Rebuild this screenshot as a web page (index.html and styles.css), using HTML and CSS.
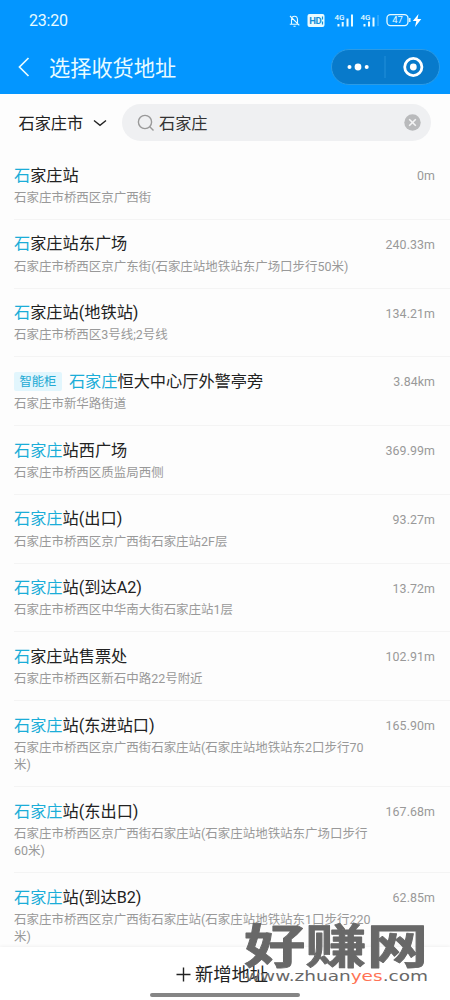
FILE: index.html
```html
<!DOCTYPE html>
<html lang="zh-CN">
<head>
<meta charset="utf-8">
<title>选择收货地址</title>
<link rel="stylesheet" href="styles.css">
</head>
<body>
<div class="screen">
  <header class="header">
    <div class="status">
      <span class="clock">23:20</span>
      <svg class="status-icons" width="140" height="20" viewBox="0 0 140 20" fill="none" stroke="#e8fbff">
        <path d="M6.5 14V10Q6.5 6.3 9.5 6.3T12.5 10V14M4.8 14.3H14.2M8.5 16.2H10.6M5 6L14.3 15.3" stroke-width="1.1"/>
        <rect x="22.5" y="4" width="17" height="13" rx="2" fill="#e8fbff" stroke="none"/>
        <text class="hd-label" x="24.2" y="14">HD</text>
        <path d="M37.5 6.5V9.5M37.5 11.5V14.5" stroke="#168ed8" stroke-width="1.2"/>
        <text class="signal-label" x="49.5" y="9.8">4G</text>
        <path d="M53.5 14V16.5M57.7 12V16.5M62.5 8.5V16.5M67 4.5V16.5" stroke-width="2"/>
        <text class="signal-label" x="75.5" y="9.8">4G</text>
        <path d="M79.5 14V16.5M84 11.5V16.5M88.5 7.5V16.5" stroke-width="2"/>
        <path d="M93 5V16" stroke="#55b9ff" stroke-width="1"/>
        <rect x="102" y="4.6" width="21" height="11" rx="3.5" stroke-width="1.3"/>
        <path d="M124.8 8V12" stroke-width="1.4"/>
        <text class="battery-label" x="112.5" y="13.3">47</text>
        <path d="M133.5 4L127.8 11H131.3L130 17L136.3 9H132.5Z" fill="#fff" stroke="none"/>
      </svg>
    </div>
    <div class="nav">
      <svg class="back" width="14" height="22" viewBox="0 0 14 22" fill="none" stroke="#e8fbff" stroke-width="1.7"><path d="M11.5 2L2.5 11L11.5 20"/></svg>
      <h1 class="nav-title">选择收货地址</h1>
      <svg class="capsule" width="109" height="36" viewBox="0 0 109 36">
        <rect x=".5" y=".5" width="108" height="35" rx="17.5" fill="#087acb" stroke="#2c9be5"/>
        <path d="M54 7V29" stroke="#238fd9"/>
        <g fill="#fff"><circle cx="18.5" cy="18" r="2"/><circle cx="27" cy="18" r="3.4"/><circle cx="35.7" cy="18" r="2"/><circle cx="82.3" cy="18" r="3.4"/></g>
        <circle cx="82.3" cy="18" r="8.6" fill="none" stroke="#fff" stroke-width="2.8"/>
      </svg>
    </div>
  </header>

  <div class="search-row">
    <span class="city">石家庄市</span>
    <svg class="chevron" width="14" height="8" viewBox="0 0 14 8" fill="none" stroke="#222" stroke-width="1.4"><path d="M1 1.5L7 6.3L13 1.5"/></svg>
    <div class="search">
      <svg width="18" height="18" viewBox="0 0 18 18" fill="none" stroke="#999" stroke-width="1.4"><circle cx="8" cy="8" r="6.6"/><path d="M12.8 12.8L16.5 16.5"/></svg>
      <span class="query">石家庄</span>
      <svg class="clear" width="17" height="17" viewBox="0 0 17 17"><circle cx="8.5" cy="8.5" r="8.2" fill="#b9babc"/><path d="M5.2 5.2L11.8 11.8M11.8 5.2L5.2 11.8" stroke="#f4f4f5" stroke-width="1.6"/></svg>
    </div>
  </div>

  <main class="list">
    <div class="item"><div class="top"><span class="name"><b>石</b>家庄站</span><span class="dist">0m</span></div><p class="addr">石家庄市桥西区京广西街</p></div>
    <div class="item"><div class="top"><span class="name"><b>石</b>家庄站东广场</span><span class="dist">240.33m</span></div><p class="addr">石家庄市桥西区京广东街(石家庄站地铁站东广场口步行50米)</p></div>
    <div class="item"><div class="top"><span class="name"><b>石</b>家庄站(地铁站)</span><span class="dist">134.21m</span></div><p class="addr">石家庄市桥西区3号线;2号线</p></div>
    <div class="item"><div class="top"><span class="tag">智能柜</span><span class="name"><b>石家庄</b>恒大中心厅外警亭旁</span><span class="dist">3.84km</span></div><p class="addr">石家庄市新华路街道</p></div>
    <div class="item"><div class="top"><span class="name"><b>石家庄</b>站西广场</span><span class="dist">369.99m</span></div><p class="addr">石家庄市桥西区质监局西侧</p></div>
    <div class="item"><div class="top"><span class="name"><b>石家庄</b>站(出口)</span><span class="dist">93.27m</span></div><p class="addr">石家庄市桥西区京广西街石家庄站2F层</p></div>
    <div class="item"><div class="top"><span class="name"><b>石家庄</b>站(到达A2)</span><span class="dist">13.72m</span></div><p class="addr">石家庄市桥西区中华南大街石家庄站1层</p></div>
    <div class="item"><div class="top"><span class="name"><b>石</b>家庄站售票处</span><span class="dist">102.91m</span></div><p class="addr">石家庄市桥西区新石中路22号附近</p></div>
    <div class="item"><div class="top"><span class="name"><b>石家庄</b>站(东进站口)</span><span class="dist">165.90m</span></div><p class="addr">石家庄市桥西区京广西街石家庄站(石家庄站地铁站东2口步行70<br>米)</p></div>
    <div class="item"><div class="top"><span class="name"><b>石家庄</b>站(东出口)</span><span class="dist">167.68m</span></div><p class="addr">石家庄市桥西区京广西街石家庄站(石家庄站地铁站东广场口步行<br>60米)</p></div>
    <div class="item"><div class="top"><span class="name"><b>石家庄</b>站(到达B2)</span><span class="dist">62.85m</span></div><p class="addr">石家庄市桥西区京广西街石家庄站(石家庄站地铁站东1口步行220<br>米)</p></div>
  </main>

  <footer class="footer">
    <div class="add"><svg width="15" height="15" viewBox="0 0 15 15" stroke="#222" stroke-width="1.4"><path d="M7.5 .5V14.5M.5 7.5H14.5"/></svg><span>新增地址</span></div>
    <div class="home-bar"></div>
  </footer>

  <svg class="watermark" width="186" height="70" viewBox="0 0 186 70">
    <text class="mark-name" transform="translate(0 46) scale(1.32 1)">好赚网</text>
    <text class="mark-url" x="1" y="64" textLength="183" lengthAdjust="spacingAndGlyphs">www.zhuan<tspan class="accent">yes</tspan>.com</text>
  </svg>
</div>
</body>
</html>
```
FILE: styles.css
```css
* { box-sizing: border-box; }
body { margin: 0; font-family: Roboto, "Noto Sans CJK SC", sans-serif; color: #222; }
.screen { position: relative; display: flex; flex-direction: column; width: 450px; height: 1000px; overflow: hidden; background: #fdfdfd; }
.header { flex: none; height: 94px; background: #0396ff; color: #e8fbff; }
.status { display: flex; justify-content: space-between; align-items: center; height: 40px; padding: 0 25px 0 29px; }
.clock { font-size: 16px; letter-spacing: -.2px; }
.signal-label, .battery-label { fill: #e8fbff; stroke: none; font-family: Roboto, sans-serif; }
.signal-label { font-size: 8px; font-weight: 500; }
.battery-label { font-size: 9.5px; text-anchor: middle; }
.hd-label { fill: #168ed8; stroke: none; font: 700 9.5px Roboto, sans-serif; letter-spacing: -.5px; }
.nav { display: flex; align-items: center; height: 54px; padding: 0 10px 0 17px; }
.nav-title { margin: 0 0 0 18px; padding-top: 3px; font-size: 21.2px; line-height: 30px; font-weight: 400; }
.capsule { margin-left: auto; }
.search-row { flex: none; display: flex; align-items: center; height: 57px; padding: 0 19px 0 18.5px; }
.city { width: 66px; padding-top: 3px; font-size: 16.2px; white-space: nowrap; line-height: 24px; }
.chevron { margin-left: 8.5px; }
.search { display: flex; align-items: center; flex: 1; height: 37px; margin-left: 15px; padding: 0 10px 0 15px; border-radius: 19px; background: #eff0f2; }
.query { margin-left: 4px; padding-top: 3px; font-size: 16.2px; line-height: 24px; color: #333; }
.clear { margin-left: auto; }
.list { flex: 1; min-height: 0; overflow: hidden; padding-left: 14px; }
.item { padding: 13.6px 15px 12.7px 0; border-bottom: 1px solid #f4f4f4; }
.top { display: flex; align-items: center; height: 22px; }
.name { font-size: 16.2px; line-height: 22px; white-space: nowrap; }
.name b { font-weight: 400; color: #1badd8; }
.tag { margin-right: 7px; padding: 1px 5.5px 0; border-radius: 2px; background: #e2f6fd; color: #22a9d3; font-size: 12.3px; line-height: 18px; }
.dist { margin-left: auto; font-size: 12.4px; letter-spacing: .07px; color: #999; }
.addr { margin: 2.2px 0 0; font-size: 12.47px; line-height: 17.3px; color: #999; white-space: nowrap; }
.footer { flex: none; display: flex; flex-direction: column; align-items: center; height: 53px; background: #fff; box-shadow: 0 -1px 3px rgba(0,0,0,.05); }
.add { display: flex; align-items: center; gap: 4px; height: 46px; padding: 9px 6px 0 0; font-size: 18.3px; line-height: 26px; }
.home-bar { width: 150px; height: 4px; border-radius: 2px; background: #858585; }
.watermark { position: absolute; left: 244px; top: 917px; overflow: visible; }
.mark-name { fill: #686868; stroke: #686868; stroke-width: .8; stroke-linejoin: round; font: 700 46.5px "Noto Sans CJK SC", sans-serif; }
.mark-url { fill: #686868; font: 14px "DejaVu Sans", sans-serif; }
.accent { fill: #ff7355; }
```
